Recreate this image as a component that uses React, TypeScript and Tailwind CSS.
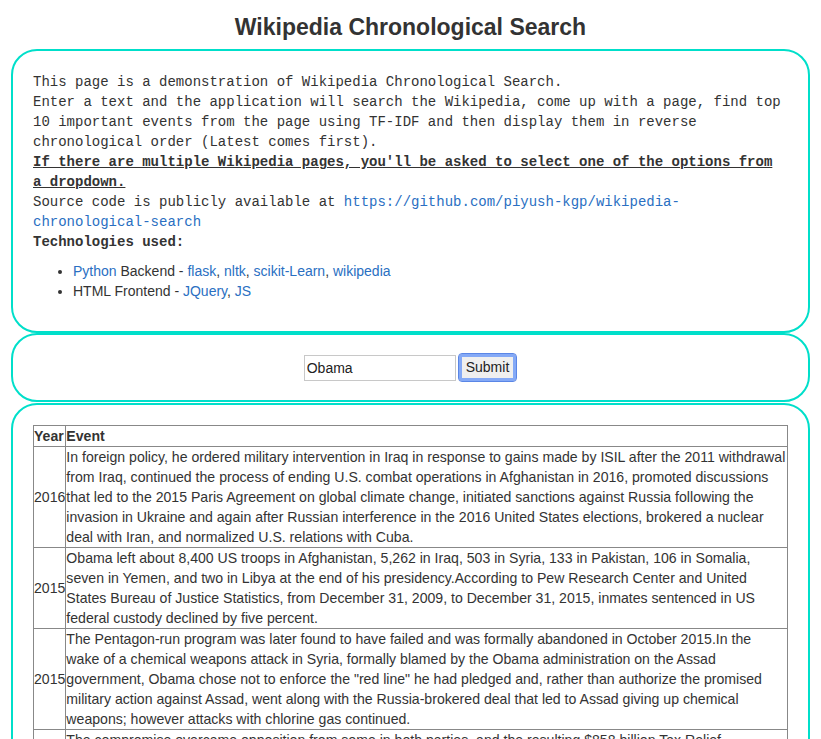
import React from "react";

const rows = [
  {
    year: "2016",
    text: "In foreign policy, he ordered military intervention in Iraq in response to gains made by ISIL after the 2011 withdrawal from Iraq, continued the process of ending U.S. combat operations in Afghanistan in 2016, promoted discussions that led to the 2015 Paris Agreement on global climate change, initiated sanctions against Russia following the invasion in Ukraine and again after Russian interference in the 2016 United States elections, brokered a nuclear deal with Iran, and normalized U.S. relations with Cuba.",
  },
  {
    year: "2015",
    text: "Obama left about 8,400 US troops in Afghanistan, 5,262 in Iraq, 503 in Syria, 133 in Pakistan, 106 in Somalia, seven in Yemen, and two in Libya at the end of his presidency.According to Pew Research Center and United States Bureau of Justice Statistics, from December 31, 2009, to December 31, 2015, inmates sentenced in US federal custody declined by five percent.",
  },
  {
    year: "2015",
    text: "The Pentagon-run program was later found to have failed and was formally abandoned in October 2015.In the wake of a chemical weapons attack in Syria, formally blamed by the Obama administration on the Assad government, Obama chose not to enforce the \"red line\" he had pledged and, rather than authorize the promised military action against Assad, went along with the Russia-brokered deal that led to Assad giving up chemical weapons; however attacks with chlorine gas continued.",
  },
  {
    year: "2010",
    text: "The compromise overcame opposition from some in both parties, and the resulting $858 billion Tax Relief, Unemployment Insurance Reauthorization, and Job Creation Act of 2010 passed with bipartisan majorities in both houses of Congress before Obama signed it on December 17, 2010.",
  },
];

const card =
  "mx-[11px] border-2 border-[#00dfca] rounded-[26px] bg-white";

export default function App() {
  return (
    <div className="min-h-screen bg-white text-[#333] font-['Liberation_Sans',Arial,sans-serif]">
      {/* header */}
      <h1 className="pt-[13px] pb-[8px] text-center text-[23px] leading-[28px] font-bold text-[#333]">
        Wikipedia Chronological Search
      </h1>

      <div className="flex flex-col gap-[1px]">
        {/* intro */}
        <div className={`${card} px-[20px] pt-[21px] pb-[20px]`}>
          <div className="font-['Liberation_Mono','Courier_New',monospace] text-[14px] leading-[20px] text-[#333]">
            <p>This page is a demonstration of Wikipedia Chronological Search.</p>
            <p>
              Enter a text and the application will search the Wikipedia, come
              up with a page, find top 10 important events from the page using
              TF-IDF and then display them in reverse chronological order
              (Latest comes first).
            </p>
            <p className="font-bold underline">
              If there are multiple Wikipedia pages, you'll be asked to select
              one of the options from a dropdown.
            </p>
            <p>
              Source code is publicly available at{" "}
              <a className="text-[#2a6fc2]" href="#">
                https://github.com/piyush-kgp/wikipedia-chronological-search
              </a>
            </p>
            <p className="font-bold">Technologies used:</p>
          </div>
          <ul className="list-disc pl-[40px] mt-[9px] mb-[10px] text-[14px] leading-[20px]">
            <li>
              <a className="text-[#2a6fc2]" href="#">Python</a> Backend -{" "}
              <a className="text-[#2a6fc2]" href="#">flask</a>,{" "}
              <a className="text-[#2a6fc2]" href="#">nltk</a>,{" "}
              <a className="text-[#2a6fc2]" href="#">scikit-Learn</a>,{" "}
              <a className="text-[#2a6fc2]" href="#">wikipedia</a>
            </li>
            <li>
              HTML Frontend - <a className="text-[#2a6fc2]" href="#">JQuery</a>,{" "}
              <a className="text-[#2a6fc2]" href="#">JS</a>
            </li>
          </ul>
        </div>

        {/* search */}
        <div className={`${card} py-[18px] flex justify-center items-center -mt-[1px]`}>
          <input
            defaultValue="Obama"
            className="w-[152px] h-[26px] border border-[#c8c8c8] px-[2px] text-[14px] text-[#222] outline-none"
          />
          <button className="ml-[2px] h-[29px] px-[7px] rounded-[4px] border border-[#5a86e6] ring-[3px] ring-[#84a9f6] ring-inset bg-[#efefef] text-[14px] text-[#222]">
            Submit
          </button>
        </div>

        {/* results */}
        <div className={`${card} px-[20px] pt-[20px] pb-[20px]`}>
          <table className="w-full border-collapse border border-[#222] text-[14.1px] leading-[20px]">
            <thead>
              <tr>
                <th className="border border-[#888] text-left font-bold px-0 py-0 leading-[20px]">Year</th>
                <th className="border border-[#888] text-left font-bold px-0 py-0">Event</th>
              </tr>
            </thead>
            <tbody>
              {rows.map((r, i) => (
                <tr key={i}>
                  <td className="border border-[#888] align-middle">{r.year}</td>
                  <td className="border border-[#888] align-top">{r.text}</td>
                </tr>
              ))}
            </tbody>
          </table>
        </div>
      </div>
    </div>
  );
}
